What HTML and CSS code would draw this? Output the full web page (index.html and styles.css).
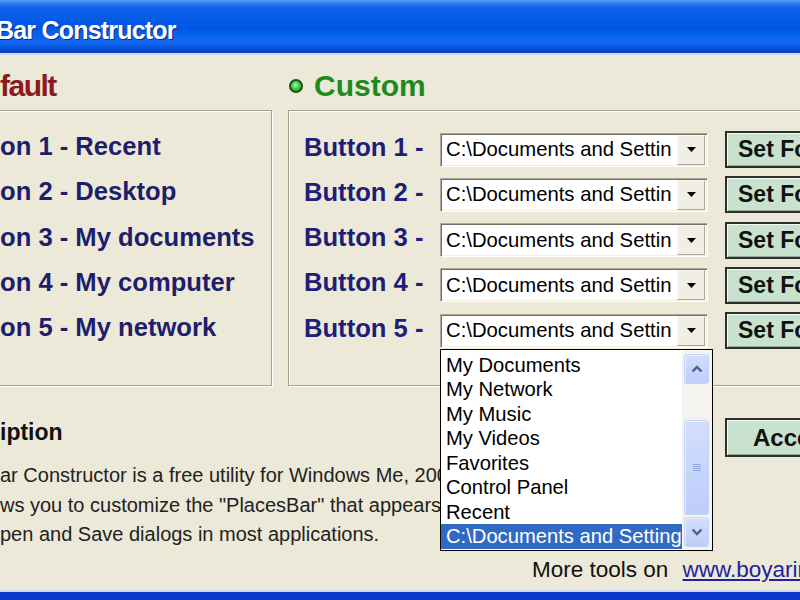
FILE: index.html
```html
<!DOCTYPE html>
<html>
<head>
<meta charset="utf-8">
<title>PlacesBar Constructor</title>
<link rel="stylesheet" href="styles.css">
</head>
<body>
<header class="titlebar"><span class="title">Bar Constructor</span></header>
<main class="client">
  <div class="columns">
    <section class="col">
      <h2 class="heading heading-default">fault</h2>
      <div class="group group-left">
        <div class="def-row">on 1 - Recent</div>
        <div class="def-row">on 2 - Desktop</div>
        <div class="def-row">on 3 - My documents</div>
        <div class="def-row">on 4 - My computer</div>
        <div class="def-row">on 5 - My network</div>
      </div>
    </section>
    <section class="col">
      <h2 class="heading heading-custom"><span class="radio"></span>Custom</h2>
      <div class="group group-right">
        <div class="row">
          <span class="btn-label">Button 1 -</span>
          <div class="combo"><span class="combo-text">C:\Documents and Settin</span><span class="combo-btn"><svg width="9" height="5" viewBox="0 0 9 5"><polygon points="0,0 9,0 4.5,5" fill="#000"/></svg></span></div>
          <button class="set-btn">Set Folder</button>
        </div>
        <div class="row">
          <span class="btn-label">Button 2 -</span>
          <div class="combo"><span class="combo-text">C:\Documents and Settin</span><span class="combo-btn"><svg width="9" height="5" viewBox="0 0 9 5"><polygon points="0,0 9,0 4.5,5" fill="#000"/></svg></span></div>
          <button class="set-btn">Set Folder</button>
        </div>
        <div class="row">
          <span class="btn-label">Button 3 -</span>
          <div class="combo"><span class="combo-text">C:\Documents and Settin</span><span class="combo-btn"><svg width="9" height="5" viewBox="0 0 9 5"><polygon points="0,0 9,0 4.5,5" fill="#000"/></svg></span></div>
          <button class="set-btn">Set Folder</button>
        </div>
        <div class="row">
          <span class="btn-label">Button 4 -</span>
          <div class="combo"><span class="combo-text">C:\Documents and Settin</span><span class="combo-btn"><svg width="9" height="5" viewBox="0 0 9 5"><polygon points="0,0 9,0 4.5,5" fill="#000"/></svg></span></div>
          <button class="set-btn">Set Folder</button>
        </div>
        <div class="row">
          <span class="btn-label">Button 5 -</span>
          <div class="combo combo-open"><span class="combo-text">C:\Documents and Settin</span><span class="combo-btn"><svg width="9" height="5" viewBox="0 0 9 5"><polygon points="0,0 9,0 4.5,5" fill="#000"/></svg></span>
            <div class="combo-list">
              <ul class="list-items">
                <li class="list-item">My Documents</li>
                <li class="list-item">My Network</li>
                <li class="list-item">My Music</li>
                <li class="list-item">My Videos</li>
                <li class="list-item">Favorites</li>
                <li class="list-item">Control Panel</li>
                <li class="list-item">Recent</li>
                <li class="list-item selected">C:\Documents and Settings\User</li>
              </ul>
              <div class="scrollbar">
                <div class="sb-btn"><svg width="12" height="8" viewBox="0 0 12 8"><path d="M1.5 6.5 L6 2 L10.5 6.5" fill="none" stroke="#4d6185" stroke-width="2.4"/></svg></div>
                <div class="sb-space"></div>
                <div class="sb-btn sb-thumb"><svg width="8" height="9" viewBox="0 0 8 9"><path d="M0 1.5H8M0 3.5H8M0 5.5H8M0 7.5H8" stroke="#93abe4" stroke-width="1"/></svg></div>
                <div class="sb-btn"><svg width="12" height="8" viewBox="0 0 12 8"><path d="M1.5 1.5 L6 6 L10.5 1.5" fill="none" stroke="#4d6185" stroke-width="2.4"/></svg></div>
              </div>
            </div>
          </div>
          <button class="set-btn">Set Folder</button>
        </div>
      </div>
    </section>
  </div>
  <div class="lower">
    <div class="desc">
      <h3 class="desc-title">iption</h3>
      <div class="desc-text">
        <div class="desc-line">ar Constructor is a free utility for Windows Me, 2000 and XP. It</div>
        <div class="desc-line">ws you to customize the "PlacesBar" that appears in the</div>
        <div class="desc-line">pen and Save dialogs in most applications.</div>
      </div>
    </div>
    <button class="accept">Accept</button>
  </div>
  <div class="more">More tools on <a class="more-link" href="#">www.boyarin.com</a></div>
</main>
<footer class="frame-bottom"></footer>
</body>
</html>
```
FILE: styles.css
```css
* { box-sizing: border-box; }
html, body { margin: 0; padding: 0; }
body {
  width: 800px;
  height: 600px;
  overflow: hidden;
  background: #ece9d8;
  font-family: "Liberation Sans", Arial, sans-serif;
  display: flex;
  flex-direction: column;
}
.titlebar {
  height: 55px;
  flex: none;
  padding-top: 6px;
  display: flex;
  align-items: center;
  border-bottom: 2px solid #d3d9ec;
  background: linear-gradient(to bottom, #5a9bfa 0px, #3480f2 3px, #0d62e8 8px, #0056e4 28px, #0a62ee 37px, #1369f3 43px, #0650dc 48px, #003fbb 53px);
}
.title {
  margin-left: -4px;
  color: #fff;
  font-size: 25px;
  line-height: 30px;
  font-weight: bold;
  letter-spacing: -0.8px;
  text-shadow: 1px 1px 0 #0c2a8c;
  white-space: nowrap;
}
.client {
  flex: 1;
  min-height: 0;
  display: flex;
  flex-direction: column;
}
.columns {
  width: 1000px;
  display: grid;
  grid-template-columns: 272px 1fr;
  column-gap: 16px;
  margin-top: 16px;
}
.heading {
  margin: 0 0 9px;
  height: 30px;
  font-size: 30px;
  line-height: 30px;
  font-weight: bold;
  display: flex;
  align-items: center;
  white-space: nowrap;
}
.heading-default { color: #8b1c1c; letter-spacing: -1.5px; }
.heading-custom { color: #1f8a1f; }
.radio {
  width: 14px;
  height: 14px;
  flex: none;
  border-radius: 50%;
  margin: 0 11px 0 1px;
  border: 2px solid #1e4f1e;
  background: radial-gradient(circle at 45% 40%, #b4f8b4 0, #4ad04a 40%, #2a9a2a 100%);
}
.group {
  height: 276px;
  border: 1px solid #a5a292;
  box-shadow: inset 1px 1px 0 #fff, 1px 1px 0 #fff;
}
.group-left {
  margin-left: -20px;
  padding: 13px 0 0 19px;
}
.def-row {
  font-size: 25.6px;
  line-height: 45.25px;
  font-weight: bold;
  color: #1e1e6c;
  white-space: nowrap;
}
.group-right {
  padding: 20px 0 0 15px;
  display: flex;
  flex-direction: column;
  gap: 8.25px;
}
.row {
  height: 37px;
  display: flex;
  align-items: center;
}
.btn-label {
  width: 136px;
  flex: none;
  margin-bottom: 6px;
  font-size: 25.6px;
  line-height: 30px;
  font-weight: bold;
  color: #1e1e78;
  white-space: nowrap;
}
.combo {
  position: relative;
  width: 268px;
  height: 34px;
  flex: none;
  padding: 2px;
  display: flex;
  align-items: center;
  background: #fff;
  border: 1px solid;
  border-color: #aca899 #fff #fff #aca899;
  box-shadow: inset 1px 1px 0 #716f64, inset -1px -1px 0 #f1efe2;
}
.combo-text {
  flex: 1;
  min-width: 0;
  padding-left: 3px;
  font-size: 20.3px;
  color: #000;
  white-space: nowrap;
  overflow: hidden;
}
.combo-btn {
  width: 28px;
  height: 30px;
  flex: none;
  display: flex;
  align-items: center;
  justify-content: center;
  background: #f0eee5;
  border: 1px solid;
  border-color: #fbfaf6 #aca899 #aca899 #fbfaf6;
}
.set-btn, .accept {
  flex: none;
  margin-left: 17px;
  width: 110px;
  padding: 0 0 0 11px;
  text-align: left;
  font-family: "Liberation Sans", Arial, sans-serif;
  font-size: 23px;
  font-weight: bold;
  color: #111;
  background: #c9e2cd;
  border: 2px solid #2e2e2e;
  box-shadow: inset 1px 1px 0 #f4fbf4, inset -1px -1px 0 #93ab97;
  white-space: nowrap;
}
.set-btn { height: 37px; }
.combo-list {
  position: absolute;
  left: -1px;
  top: calc(100% + 2px);
  width: 273px;
  height: 202px;
  z-index: 5;
  display: flex;
  background: #fff;
  border: 1px solid #000;
}
.list-items {
  flex: 1;
  min-width: 0;
  margin: 0;
  padding: 3px 0 0;
  list-style: none;
}
.list-item {
  height: 24.5px;
  line-height: 24.5px;
  padding-left: 5px;
  font-size: 20.2px;
  color: #000;
  white-space: nowrap;
  overflow: hidden;
}
.list-item.selected { background: #316ac5; color: #fff; }
.scrollbar {
  width: 30px;
  flex: none;
  padding: 4px 3px 0 2px;
  display: flex;
  flex-direction: column;
  background: #f4f3ee;
}
.sb-btn {
  height: 30px;
  flex: none;
  display: flex;
  align-items: center;
  justify-content: center;
  border-radius: 3px;
  border: 1px solid #c3d2f7;
  background: linear-gradient(to bottom, #d3defd, #bccdf8);
  box-shadow: inset 1px 1px 0 rgba(255,255,255,.6);
}
.sb-space { height: 36px; flex: none; }
.sb-thumb { height: 95px; margin-bottom: 2px; }
.lower {
  display: flex;
}
.desc {
  width: 708px;
  flex: none;
  padding-top: 32px;
}
.desc-title {
  margin: 0;
  font-size: 23px;
  line-height: 28px;
  font-weight: bold;
  color: #111;
}
.desc-text {
  margin-top: 15px;
  font-size: 20px;
  line-height: 29.5px;
  color: #222;
}
.desc-line { white-space: nowrap; }
.accept {
  margin-top: 32px;
  height: 39px;
  font-size: 24px;
  padding-left: 26px;
}
.more {
  margin-top: 8px;
  padding-left: 532px;
  font-size: 22.5px;
  line-height: 24px;
  color: #111;
  white-space: nowrap;
}
.more-link {
  margin-left: 8px;
  color: #22229a;
  text-decoration: underline;
}
.frame-bottom {
  height: 10px;
  flex: none;
  border-top: 2px solid #ccd5ee;
  background: #0a37cc;
}
```
